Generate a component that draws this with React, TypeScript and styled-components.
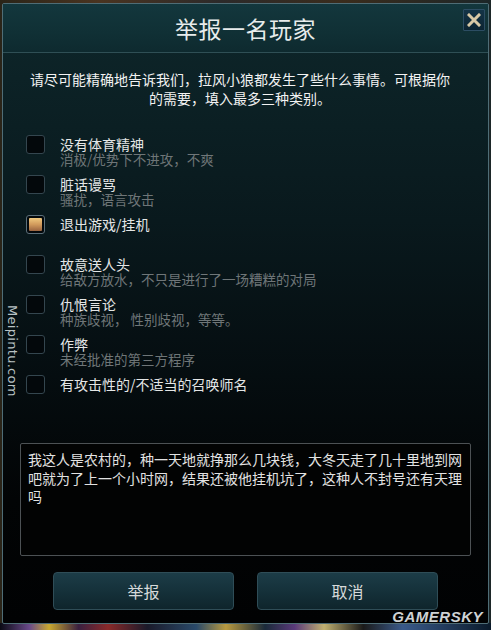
import styled, { createGlobalStyle } from 'styled-components';

const GlobalStyle = createGlobalStyle`
  html, body {
    margin: 0;
    padding: 0;
    background: #000;
  }
  body {
    font-family: "Noto Sans CJK SC", "Noto Sans", sans-serif;
  }
`;

const Screen = styled.div`
  position: relative;
  width: 491px;
  height: 630px;
  overflow: hidden;
  display: flex;
  flex-direction: column;
  background: linear-gradient(90deg, #2a2418 0%, #4a3420 20%, #2c2a2a 45%, #3a2c1c 70%, #1c2628 100%);
`;

const BottomStrip = styled.div`
  position: absolute;
  left: 0;
  right: 0;
  bottom: 0;
  height: 7px;
  background: linear-gradient(
    90deg,
    #0a0a14 0%,
    #6a4a8a 6%,
    #c8a830 10%,
    #3a2040 16%,
    #8a2a2a 22%,
    #1a1a2a 30%,
    #2a4a6a 40%,
    #b89a40 46%,
    #1a2a3a 54%,
    #5a3a7a 60%,
    #c0b070 66%,
    #1a1a1a 74%,
    #3a5a8a 82%,
    #0a1a2a 100%
  );
`;

const Panel = styled.div`
  margin: 3px 2px 0 2px;
  height: 619px;
  border: 1px solid #4f6d76;
  border-radius: 2px;
  display: flex;
  flex-direction: column;
  position: relative;
  z-index: 1;
  background: linear-gradient(
    180deg,
    #0e272b 0%,
    #0c2226 12%,
    #09191d 35%,
    #050d10 60%,
    #020405 80%,
    #010203 100%
  );
`;

const Header = styled.div`
  position: relative;
  height: 48px;
  display: flex;
  align-items: center;
  justify-content: center;
  border-bottom: 1px solid #2f4f55;
  background: linear-gradient(180deg, #13373d 0%, #103035 60%, #0e2a2f 100%);
`;

const Title = styled.h1`
  margin: 0;
  font-size: 23px;
  font-weight: 400;
  color: #e8ecec;
  letter-spacing: 0.5px;
`;

const CloseButton = styled.button`
  position: absolute;
  top: 5px;
  right: 3px;
  width: 22px;
  height: 22px;
  padding: 0;
  border: 1px solid #2c4d63;
  border-radius: 1px;
  background: linear-gradient(180deg, #143447 0%, #0c2432 100%);
  display: flex;
  align-items: center;
  justify-content: center;
`;

const Intro = styled.p`
  margin: 17px 11px 0 0;
  font-size: 14px;
  line-height: 19px;
  color: #f2f2f2;
  text-align: center;
`;

const List = styled.div`
  margin: 27px 0 0 23px;
  display: flex;
  flex-direction: column;
`;

const Row = styled.div`
  height: 40px;
  display: flex;
  align-items: flex-start;
  gap: 15px;
`;

const Box = styled.div<{ $checked?: boolean }>`
  width: 19px;
  height: 19px;
  box-sizing: border-box;
  border: 1px solid ${(p) => (p.$checked ? '#5b6f7a' : '#34464f')};
  border-radius: 3px;
  background: #03080b;
  padding: 2px;
  flex-shrink: 0;

  &::after {
    content: '';
    display: ${(p) => (p.$checked ? 'block' : 'none')};
    width: 100%;
    height: 100%;
    border-radius: 1px;
    background: linear-gradient(180deg, #f0c97e 0%, #d19a5c 50%, #9a6440 100%);
  }
`;

const TextCol = styled.div`
  display: flex;
  flex-direction: column;
  gap: 0;
  padding-top: 1px;
`;

const Label = styled.span`
  font-size: 14px;
  line-height: 16px;
  color: #e4e6e6;
`;

const Sub = styled.span`
  font-size: 13.5px;
  line-height: 15px;
  color: #6f7678;
`;

const Comment = styled.textarea`
  margin: 28px 17px 0 17px;
  height: 113px;
  box-sizing: border-box;
  padding: 6px 7px;
  border: 1px solid #4c5154;
  border-radius: 2px;
  background: #020303;
  color: #e2e2e2;
  font-family: "Noto Sans CJK SC", "Noto Sans", sans-serif;
  font-size: 14px;
  line-height: 18.5px;
  resize: none;
  overflow: hidden;
  outline: none;
`;

const Actions = styled.div`
  margin-top: 16px;
  display: flex;
  justify-content: center;
  gap: 23px;
`;

const ActionButton = styled.button`
  width: 181px;
  height: 38px;
  border: 1px solid #2f4d57;
  border-radius: 4px;
  background: linear-gradient(180deg, #1c3c47 0%, #15313a 50%, #0f252c 100%);
  color: #d6dada;
  font-family: "Noto Sans CJK SC", "Noto Sans", sans-serif;
  font-size: 16px;
  cursor: pointer;
`;

const SideMark = styled.div`
  position: absolute;
  left: 5px;
  top: 305px;
  writing-mode: vertical-rl;
  font-family: "DejaVu Sans", "Liberation Sans", sans-serif;
  font-size: 13px;
  color: #b8c2c4;
  letter-spacing: 0.3px;
  z-index: 2;
`;

const CornerMark = styled.div`
  position: absolute;
  right: 8px;
  bottom: 5px;
  font-family: "Liberation Sans", Arial, sans-serif;
  font-size: 15px;
  font-weight: 700;
  font-style: italic;
  color: #cfd2d4;
  letter-spacing: 0.5px;
  z-index: 2;
`;

const items: { label: string; sub?: string; checked?: boolean }[] = [
  { label: '没有体育精神', sub: '消极/优势下不进攻，不爽' },
  { label: '脏话谩骂', sub: '骚扰，语言攻击' },
  { label: '退出游戏/挂机', checked: true },
  { label: '故意送人头', sub: '给敌方放水，不只是进行了一场糟糕的对局' },
  { label: '仇恨言论', sub: '种族歧视， 性别歧视，等等。' },
  { label: '作弊', sub: '未经批准的第三方程序' },
  { label: '有攻击性的/不适当的召唤师名' },
];

const comment =
  '我这人是农村的，种一天地就挣那么几块钱，大冬天走了几十里地到网吧就为了上一个小时网，结果还被他挂机坑了，这种人不封号还有天理吗';

export default function App() {
  return (
    <>
      <GlobalStyle />
      <Screen>
        <Panel>
          <Header>
            <Title>举报一名玩家</Title>
            <CloseButton aria-label="关闭">
              <svg width="14" height="14" viewBox="0 0 14 14">
                <path d="M2 2 L12 12 M12 2 L2 12" stroke="#d9c9a6" strokeWidth="3" strokeLinecap="square" />
              </svg>
            </CloseButton>
          </Header>
          <Intro>
            请尽可能精确地告诉我们，拉风小狼都发生了些什么事情。可根据你
            <br />
            的需要，填入最多三种类别。
          </Intro>
          <List>
            {items.map((it) => (
              <Row key={it.label}>
                <Box $checked={it.checked} />
                <TextCol>
                  <Label>{it.label}</Label>
                  {it.sub && <Sub>{it.sub}</Sub>}
                </TextCol>
              </Row>
            ))}
          </List>
          <Comment readOnly defaultValue={comment} />
          <Actions>
            <ActionButton>举报</ActionButton>
            <ActionButton>取消</ActionButton>
          </Actions>
        </Panel>
        <SideMark>Meipintu.com</SideMark>
        <CornerMark>GAMERSKY</CornerMark>
        <BottomStrip />
      </Screen>
    </>
  );
}
